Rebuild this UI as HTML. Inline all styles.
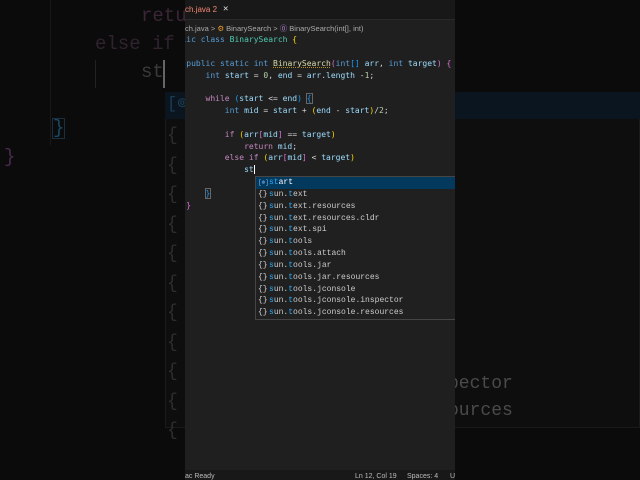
<!DOCTYPE html>
<html><head><meta charset="utf-8"><style>
*{margin:0;padding:0;box-sizing:border-box}
body{width:640px;height:480px;background:#0b0b0b;position:relative;overflow:hidden;font-family:"Liberation Mono",monospace}
.bg{position:absolute;font-family:"Liberation Mono",monospace;font-size:19px;white-space:pre;line-height:1}
.panel{position:absolute;left:185px;top:0;width:270px;height:480px;background:#1f1f1f;overflow:hidden}
.tabs{position:absolute;left:0;top:0;width:270px;height:20px;background:#181818;border-bottom:1px solid #2a2a2a}
.code{position:absolute;left:-18px;top:34px;font-size:8px;line-height:11.85px;white-space:pre;color:#d4d4d4}
.k{color:#569cd6}.v{color:#9cdcfe}.c{color:#4ec9b0}.f{color:#dcdcaa}.p{color:#c586c0}.n{color:#b5cea8}.y{color:#ffd700}.m{color:#da70d6}.b{color:#179fff}
.sug{position:absolute;left:70px;top:176px;width:210px;height:144px;background:#202020;border:1px solid #454545;font-size:8px;line-height:11.85px;white-space:nowrap;color:#ccc}
.sug div{padding-left:13px;position:relative;height:11.85px}
.sug div:before{content:"{}";position:absolute;left:2px;color:#ccc}
.sug div.sel{background:#04395e;color:#fff}
.sug div.sel:before{content:"[⊚]";font-size:6px;color:#75beff}
.sug span{color:#2aaaff}
.status{position:absolute;left:0;top:470px;width:270px;height:10px;background:#181818;font-family:"Liberation Sans",sans-serif;font-size:7px;color:#bbb;line-height:14px;white-space:nowrap}
</style></head><body>
<div class="bg" style="left:141px;top:7px;color:#3a2636">retu</div>
<div class="bg" style="left:95px;top:35px;color:#30222e">else if</div>
<div class="bg" style="left:141px;top:63px;color:#3a3a3a">st</div>
<div style="position:absolute;left:163px;top:60px;width:2px;height:28px;background:#666"></div>
<div style="position:absolute;left:95px;top:60px;width:1px;height:28px;background:#222"></div>
<div style="position:absolute;left:50px;top:0;width:1px;height:145px;background:#181818"></div>
<div class="bg" style="left:52px;top:118px;color:#1a4a64;border:1px solid #1a3040">}</div>
<div class="bg" style="left:4px;top:148px;color:#4a2850">}</div>
<div style="position:absolute;left:165px;top:92px;width:475px;height:336px;background:#0e0e0e;border:1px solid #1a1a1a"></div>
<div style="position:absolute;left:165px;top:92px;width:475px;height:27px;background:#0a1520"></div>
<div class="bg" style="left:167px;top:96px;color:#1a3e52;font-size:17px">[⊚</div>
<div class="bg" style="left:167px;top:122px;color:#2e2e2e;font-size:18px;line-height:29.5px">{
{
{
{
{
{
{
{
{
{
{</div>
<div class="bg" style="left:448px;top:375px;color:#4a4a4a;font-size:18px">pector</div>
<div class="bg" style="left:448px;top:402px;color:#4a4a4a;font-size:18px">ources</div>

<div class="panel">
<div class="tabs"><span style="position:absolute;left:0;top:5px;font-family:'Liberation Sans',sans-serif;font-size:8px;color:#f48771">ch.java 2</span><span style="position:absolute;left:38px;top:4px;font-size:9px;color:#ddd">✕</span></div>
<div style="position:absolute;left:0;top:23px;font-family:'Liberation Sans',sans-serif;font-size:7.5px;color:#aaa;white-space:pre">ch.java &gt; <span style="color:#ee9d28">⚙</span> BinarySearch &gt; <span style="color:#b180d7">⓪</span> BinarySearch(int[], int)</div>
<pre class="code"><span class="k">public</span> <span class="k">class</span> <span class="c">BinarySearch</span> <span class="y">{</span>

    <span class="k">public</span> <span class="k">static</span> <span class="k">int</span> <span class="f" style="text-decoration:underline dotted #b89500">BinarySearch</span><span class="m">(</span><span class="k">int</span><span class="b">[]</span> <span class="v">arr</span>, <span class="k">int</span> <span class="v">target</span><span class="m">)</span> <span class="m">{</span>
        <span class="k">int</span> <span class="v">start</span> = <span class="n">0</span>, <span class="v">end</span> = <span class="v">arr</span>.<span class="v">length</span> -<span class="n">1</span>;

        <span class="p">while</span> <span class="b">(</span><span class="v">start</span> &lt;= <span class="v">end</span><span class="b">)</span> <span class="b" style="outline:1px solid #666">{</span>
            <span class="k">int</span> <span class="v">mid</span> = <span class="v">start</span> + <span class="y">(</span><span class="v">end</span> - <span class="v">start</span><span class="y">)</span>/<span class="n">2</span>;

            <span class="p">if</span> <span class="y">(</span><span class="v">arr</span><span class="m">[</span><span class="v">mid</span><span class="m">]</span> == <span class="v">target</span><span class="y">)</span>
                <span class="p">return</span> <span class="v">mid</span>;
            <span class="p">else</span> <span class="p">if</span> <span class="y">(</span><span class="v">arr</span><span class="m">[</span><span class="v">mid</span><span class="m">]</span> &lt; <span class="v">target</span><span class="y">)</span>
                <span class="v">st</span><span style="border-left:1px solid #fff"></span>

        <span class="b" style="outline:1px solid #666">}</span>
    <span class="m">}</span></pre>
<div class="sug"><div class="sel"><span>st</span>art</div><div><span>s</span>un.<span>t</span>ext</div><div><span>s</span>un.<span>t</span>ext.resources</div><div><span>s</span>un.<span>t</span>ext.resources.cldr</div><div><span>s</span>un.<span>t</span>ext.spi</div><div><span>s</span>un.<span>t</span>ools</div><div><span>s</span>un.<span>t</span>ools.attach</div><div><span>s</span>un.<span>t</span>ools.jar</div><div><span>s</span>un.<span>t</span>ools.jar.resources</div><div><span>s</span>un.<span>t</span>ools.jconsole</div><div><span>s</span>un.<span>t</span>ools.jconsole.inspector</div><div><span>s</span>un.<span>t</span>ools.jconsole.resources</div></div>
<div class="status"><span style="position:absolute;left:0">ac Ready</span><span style="position:absolute;left:170px">Ln 12, Col 19</span><span style="position:absolute;left:222px">Spaces: 4</span><span style="position:absolute;left:265px">U</span></div>
</div>
</body></html>
